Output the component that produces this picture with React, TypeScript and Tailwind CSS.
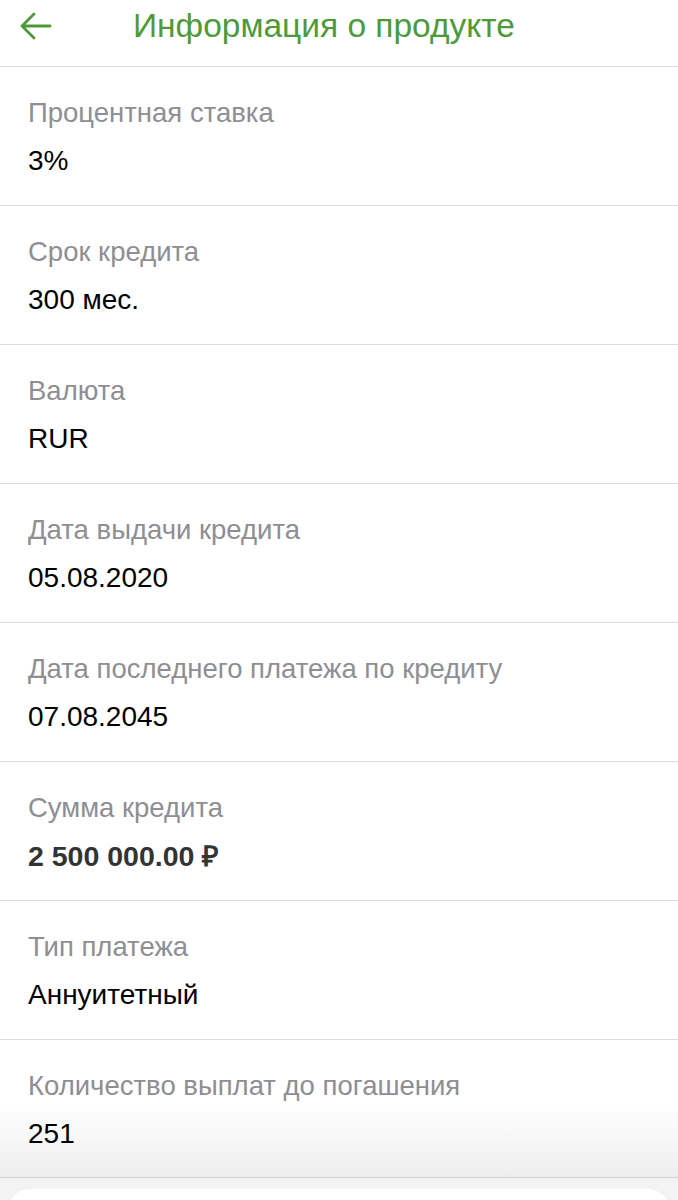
import React from "react";

const rows = [
  { label: "Процентная ставка", value: "3%" },
  { label: "Срок кредита", value: "300 мес." },
  { label: "Валюта", value: "RUR" },
  { label: "Дата выдачи кредита", value: "05.08.2020" },
  { label: "Дата последнего платежа по кредиту", value: "07.08.2045" },
  { label: "Сумма кредита", value: "2 500 000.00 ₽", bold: true },
  { label: "Тип платежа", value: "Аннуитетный" },
];

const Row = ({ label, value, bold }: { label: string; value: string; bold?: boolean }) => (
  <div className="h-[139px] border-t border-[#dcdcdc] pl-[28px] pt-[30px]">
    <div className="text-[27.5px] leading-[32px] text-[#8e8e93]">{label}</div>
    <div
      className={
        bold
          ? "mt-[16px] text-[28.5px] leading-[32px] font-bold text-[#333333]"
          : "mt-[16px] text-[28px] leading-[32px] text-black"
      }
    >
      {value}
    </div>
  </div>
);

const App = () => {
  return (
    <div
      className="w-[678px] h-[1200px] overflow-hidden bg-white"
      style={{ fontFamily: '"Liberation Sans", Arial, sans-serif' }}
    >
      {/* Header */}
      <div className="h-[66px] relative flex items-start">
        <div className="h-[52px] w-full flex items-center">
          <svg width="34" height="30" viewBox="0 0 34 30" className="ml-[19px]" fill="none">
            <path
              d="M3 15H31M15 3L3 15L15 27"
              stroke="#4e9a3a"
              strokeWidth="2.8"
              strokeLinecap="round"
              strokeLinejoin="round"
            />
          </svg>
          <div className="ml-[80px] text-[33.5px] text-[#4e9a3a]">Информация о продукте</div>
        </div>
      </div>

      {rows.map((r) => (
        <Row key={r.label} {...r} />
      ))}

      {/* Last row fading */}
      <div className="h-[138px] border-t border-[#dcdcdc] pl-[28px] pt-[30px] bg-gradient-to-b from-white from-45% to-[#eeeeee]">
        <div className="text-[27.5px] leading-[32px] text-[#8e8e93]">Количество выплат до погашения</div>
        <div className="mt-[16px] text-[28px] leading-[32px] text-black">251</div>
      </div>

      {/* Bottom sheet */}
      <div className="border-t border-[#cfcfcf] bg-[#f3f3f3] pt-[11px] px-[8px] h-[40px]">
        <div className="h-full bg-white rounded-t-[22px]" />
      </div>
    </div>
  );
};

export default App;
